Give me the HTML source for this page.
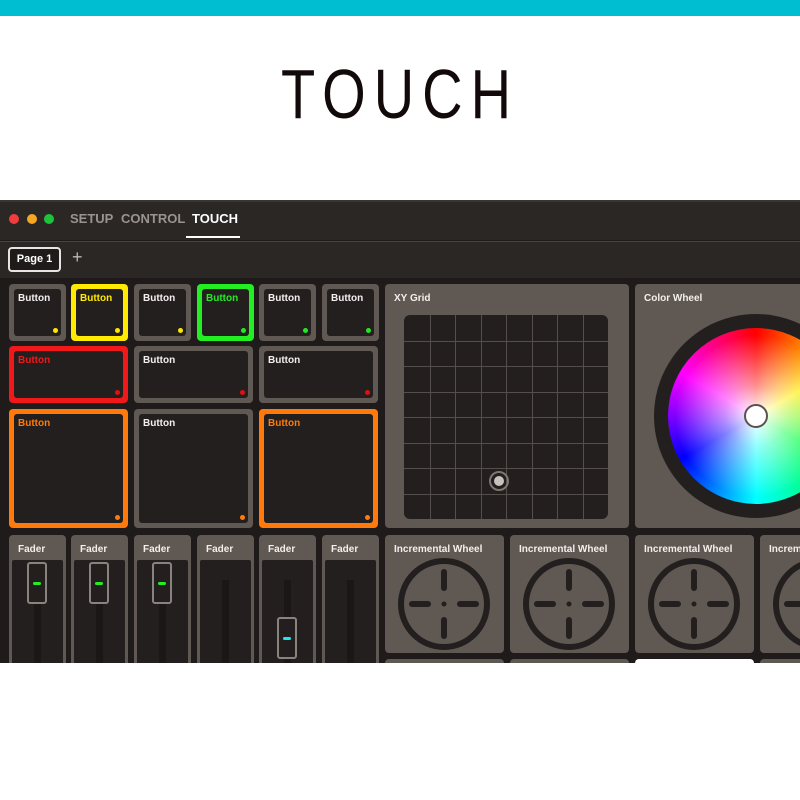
<!DOCTYPE html>
<html><head><meta charset="utf-8"><style>
*{margin:0;padding:0;box-sizing:border-box}
html,body{width:800px;height:800px;overflow:hidden}
body{background:#fff;position:relative;font-family:"Liberation Sans",sans-serif}
.abs{position:absolute}
.title{position:absolute;left:0;width:800px;top:58px;text-align:center;font-size:70px;color:#120a0a;letter-spacing:10px;line-height:72px;transform:scaleX(0.8);font-weight:normal}
.app{position:absolute;left:0;top:200px;width:800px;height:463px;background:#1f1b1a;overflow:hidden}
.bar{position:absolute;left:0;top:0;width:800px;height:40px;background:#2b2725;border-top:2px solid #3a3533}
.pbar{position:absolute;left:0;top:41px;width:800px;height:37px;background:#2b2725;border-top:1px solid #4a4441}
.p{position:absolute;background:#5f5853;border-radius:4px}
.in{position:absolute;background:#231f1e;border-radius:3px}
.lbl{position:absolute;left:9px;top:9px;font-size:10px;font-weight:bold;color:#f2efed;white-space:nowrap}
.dot{position:absolute;width:5px;height:5px;border-radius:50%}
#c{position:absolute;left:0;top:0;width:800px;height:800px;overflow:hidden}
</style></head><body>
<div class="abs" style="left:0;top:0;width:800px;height:16px;background:#00bed2"></div>
<div class="title">TOUCH</div>

<div class="app">
 <div class="bar">
  <div class="abs" style="left:9px;top:12px;width:10px;height:10px;border-radius:50%;background:#f03c3c"></div>
  <div class="abs" style="left:27px;top:12px;width:10px;height:10px;border-radius:50%;background:#f5a623"></div>
  <div class="abs" style="left:44px;top:12px;width:10px;height:10px;border-radius:50%;background:#1fc33b"></div>
  <div class="abs" style="left:70px;top:9px;font-size:13px;font-weight:bold;color:#9a938f">SETUP</div>
  <div class="abs" style="left:121px;top:9px;font-size:13px;font-weight:bold;color:#9a938f">CONTROL</div>
  <div class="abs" style="left:192px;top:9px;font-size:13px;font-weight:bold;color:#fff">TOUCH</div>
  <div class="abs" style="left:186px;top:34px;width:54px;height:2px;background:#fff"></div>
 </div>
 <div class="pbar">
  <div class="abs" style="left:8px;top:5px;width:53px;height:25px;border:2px solid #e8e4e2;border-radius:4px;background:#1f1b1a;color:#fff;font-size:11px;font-weight:bold;text-align:center;line-height:21px">Page 1</div>
  <div class="abs" style="left:72px;top:5px;font-size:18px;color:#bdb7b3">+</div>
 </div>
</div>

<div id="c"></div>
<script>
var h='';
var row1=[[9,null,'#ffe600'],[71,'#ffea00','#ffe600'],[134,null,'#ffe600'],[197,'#22ee22','#22e822'],[259,null,'#22e822'],[322,null,'#22e822']];
row1.forEach(function(r){
 var c=r[1]||'#5f5853';
 h+='<div class="p" style="left:'+r[0]+'px;top:284px;width:57px;height:57px;background:'+c+'"><div class="in" style="left:5px;top:5px;right:5px;bottom:5px"></div><div class="lbl" style="color:'+(r[1]||'#f2efed')+'">Button</div><div class="dot" style="right:8px;bottom:8px;background:'+r[2]+'"></div></div>';
});
var row2=[[9,'#f01818','#e01010'],[134,null,'#e01010'],[259,null,'#e01010']];
row2.forEach(function(r){
 var c=r[1]||'#5f5853';
 h+='<div class="p" style="left:'+r[0]+'px;top:346px;width:119px;height:57px;background:'+c+'"><div class="in" style="left:5px;top:5px;right:5px;bottom:5px"></div><div class="lbl" style="color:'+(r[1]||'#f2efed')+'">Button</div><div class="dot" style="right:8px;bottom:8px;background:'+r[2]+'"></div></div>';
});
var row3=[[9,'#ff7a0a'],[134,null],[259,'#ff7a0a']];
row3.forEach(function(r){
 var c=r[1]||'#5f5853';
 h+='<div class="p" style="left:'+r[0]+'px;top:409px;width:119px;height:119px;background:'+c+'"><div class="in" style="left:5px;top:5px;right:5px;bottom:5px"></div><div class="lbl" style="color:'+(r[1]||'#f2efed')+'">Button</div><div class="dot" style="right:8px;bottom:8px;background:#ff7a0a"></div></div>';
});
var fx=[9,71,134,197,259,322];
fx.forEach(function(x,i){
 h+='<div class="p" style="left:'+x+'px;top:535px;width:57px;height:140px"><div class="lbl" style="top:9px">Fader</div>';
 h+='<div class="in" style="left:3px;top:25px;width:51px;height:120px;border-radius:2px"></div>';
 h+='<div class="abs" style="left:25px;top:45px;width:7px;height:100px;background:#1a1716"></div>';
 if(i<3){h+='<div class="abs" style="left:18px;top:27px;width:20px;height:42px;border:2px solid #8a827d;border-radius:3px;background:#231f1e"><div class="abs" style="left:4px;top:18px;width:8px;height:3px;border-radius:2px;background:#22ee22"></div></div>';}
 if(i==4){h+='<div class="abs" style="left:18px;top:82px;width:20px;height:42px;border:2px solid #8a827d;border-radius:3px;background:#231f1e"><div class="abs" style="left:4px;top:18px;width:8px;height:3px;border-radius:2px;background:#22e8ee"></div></div>';}
 h+='</div>';
});
var g='';
for(var k=1;k<8;k++){g+='<div class="abs" style="left:'+(k*25.5)+'px;top:0;width:1px;height:204px;background:#554e4a"></div><div class="abs" style="top:'+(k*25.5)+'px;left:0;height:1px;width:204px;background:#554e4a"></div>';}
h+='<div class="p" style="left:385px;top:284px;width:244px;height:244px"><div class="lbl">XY Grid</div><div class="in" style="left:19px;top:31px;width:204px;height:204px;border-radius:6px;overflow:hidden">'+g+'<div class="abs" style="left:85px;top:156px;width:20px;height:20px;border-radius:50%;border:2px solid #7d7571;"><div class="abs" style="left:3px;top:3px;width:10px;height:10px;border-radius:50%;background:#c9c1bc"></div></div></div></div>';
h+='<div class="p" style="left:635px;top:284px;width:180px;height:244px;overflow:hidden"><div class="lbl">Color Wheel</div>';
h+='<div class="abs" style="left:19px;top:30px;width:204px;height:204px;border-radius:50%;background:#231f1e"></div>';
h+='<div class="abs" style="left:33px;top:44px;width:176px;height:176px;border-radius:50%;background:radial-gradient(circle,#fff 0%,rgba(255,255,255,0.55) 25%,rgba(255,255,255,0) 65%),conic-gradient(#ff0000,#ffee00 60deg,#00ff40 120deg,#00ffff 180deg,#0000ff 240deg,#ff00ff 300deg,#ff0000)"></div>';
h+='<div class="abs" style="left:109px;top:120px;width:24px;height:24px;border-radius:50%;background:#fff;border:2px solid #5a524e"></div></div>';
var svgW='<svg class="abs" style="left:11px;top:21px" width="96" height="96" viewBox="0 0 96 96"><circle cx="48" cy="48" r="43" fill="#5f5853" stroke="#231f1e" stroke-width="6"/><g stroke="#231f1e" stroke-linecap="round" stroke-width="6"><line x1="48" y1="16" x2="48" y2="32"/><line x1="48" y1="64" x2="48" y2="80"/><line x1="16" y1="48" x2="32" y2="48"/><line x1="64" y1="48" x2="80" y2="48"/></g><circle cx="48" cy="48" r="2.5" fill="#231f1e"/><g fill="#231f1e"><path d="M48 3 l-4 5 h8z"/><path d="M48 93 l-4 -5 h8z"/><path d="M3 48 l5 -4 v8z"/><path d="M93 48 l-5 -4 v8z"/><circle cx="78" cy="18" r="2.5"/><circle cx="18" cy="18" r="2.5"/><circle cx="78" cy="78" r="2.5"/><circle cx="18" cy="78" r="2.5"/></g></svg>';
[385,510,635,760].forEach(function(x){
 h+='<div class="p" style="left:'+x+'px;top:535px;width:119px;height:118px;overflow:hidden"><div class="lbl">Incremental Wheel</div>'+svgW+'</div>';
});
[385,510,760].forEach(function(x){h+='<div class="p" style="left:'+x+'px;top:659px;width:119px;height:4px;border-radius:4px 4px 0 0"></div>';});
h+='<div class="abs" style="left:635px;top:659px;width:119px;height:4px;background:#fff;border-radius:4px 4px 0 0"></div>';
h+='<div class="abs" style="left:0;top:663px;width:800px;height:137px;background:#fff"></div>';
document.getElementById('c').innerHTML=h;
</script>
</body></html>
